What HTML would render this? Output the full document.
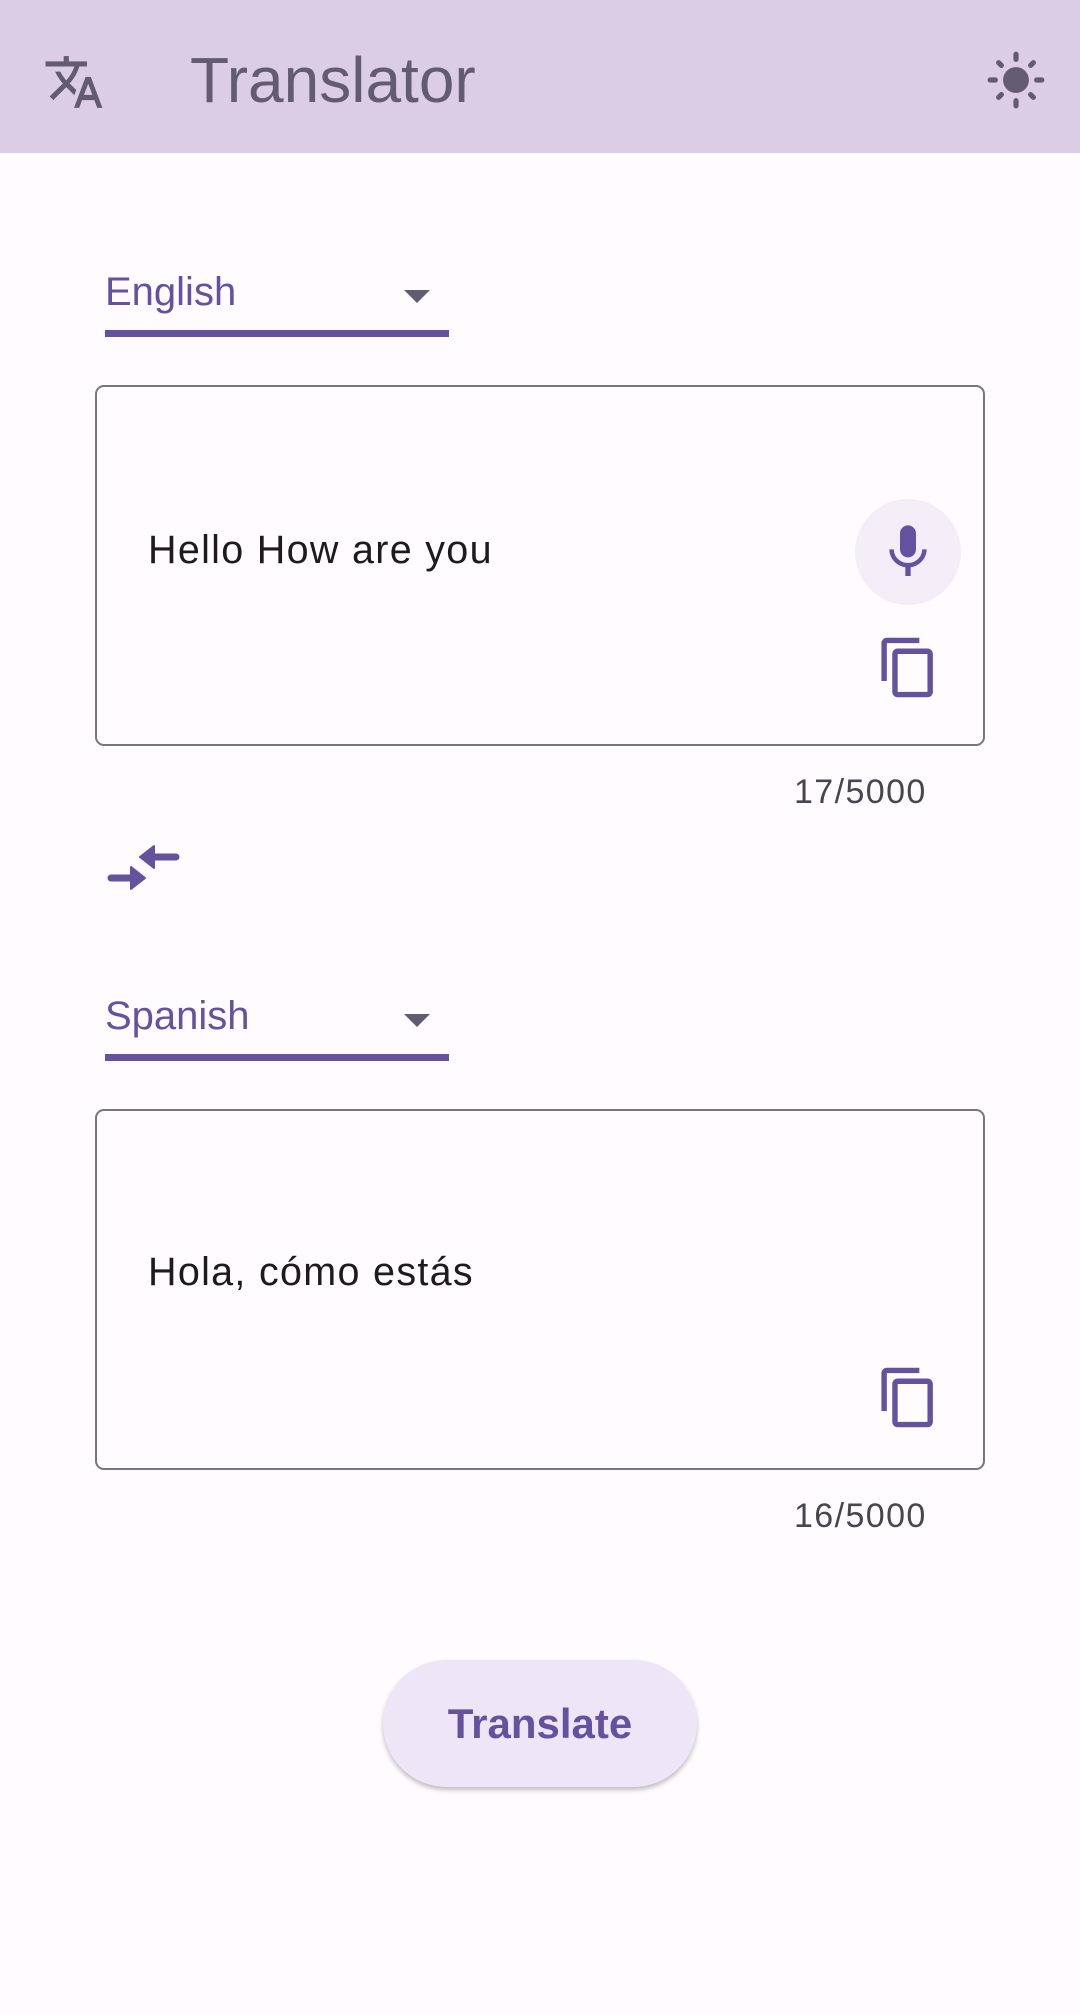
<!DOCTYPE html>
<html><head><meta charset="utf-8"><style>
*{margin:0;padding:0;box-sizing:border-box}
body{width:1080px;height:2014px;background:#fffbfe;font-family:"Liberation Sans",Roboto,sans-serif;position:relative;overflow:hidden}
.abs{position:absolute}
.hdr{left:0;top:0;width:1080px;height:153px;background:#dccde7}
.title{left:190px;top:42px;font-size:64px;color:#625b71;line-height:76px}
.lang{left:105px;font-size:40px;color:#65529f;line-height:46px}
.ul{left:105px;width:344px;height:7px;background:#65529f}
.arrow{width:0;height:0;border-left:13px solid transparent;border-right:13px solid transparent;border-top:13px solid #625b71}
.box{left:95px;width:890px;height:361px;border:2px solid #79747e;border-radius:9px}
.txt{left:148px;font-size:39.5px;letter-spacing:1.3px;color:#1d1b20;line-height:46px}
.cnt{left:794px;font-size:34px;letter-spacing:1.4px;color:#49454f;line-height:40px}
.btn{left:383px;top:1660px;width:314px;height:127px;border-radius:64px;background:#eee6f6;box-shadow:0 3px 5px rgba(0,0,0,.25);font-weight:bold;color:#65529f;font-size:42px;text-align:center;line-height:127px}
</style></head><body>
<div class="abs hdr"></div>
<svg class="abs" style="left:43px;top:51px" width="62" height="62" viewBox="0 0 24 24"><path fill="#625b71" d="M12.87 15.07l-2.54-2.51.03-.03c1.74-1.94 2.98-4.17 3.71-6.53H17V4h-7V2H8v2H1v1.99h11.17C11.5 7.92 10.44 9.75 9 11.35 8.07 10.32 7.3 9.19 6.69 8h-2c.73 1.63 1.73 3.17 2.98 4.56l-5.09 5.02L4 19l5-5 3.11 3.11.76-2.04zM18.5 10h-2L12 22h2l1.12-3h4.75L21 22h2l-4.5-12zm-2.62 7l1.62-4.33L19.12 17h-3.24z"/></svg>
<div class="abs title">Translator</div>
<svg class="abs" style="left:985px;top:49px" width="62" height="62" viewBox="0 0 24 24"><path fill="#625b71" d="M12 7c-2.76 0-5 2.24-5 5s2.24 5 5 5 5-2.24 5-5-2.24-5-5-5zM2 13h2c.55 0 1-.45 1-1s-.45-1-1-1H2c-.55 0-1 .45-1 1s.45 1 1 1zm18 0h2c.55 0 1-.45 1-1s-.45-1-1-1h-2c-.55 0-1 .45-1 1s.45 1 1 1zM11 2v2c0 .55.45 1 1 1s1-.45 1-1V2c0-.55-.45-1-1-1s-1 .45-1 1zm0 18v2c0 .55.45 1 1 1s1-.45 1-1v-2c0-.55-.45-1-1-1s-1 .45-1 1zM5.99 4.58c-.39-.39-1.03-.39-1.41 0-.39.39-.39 1.03 0 1.41l1.06 1.06c.39.39 1.03.39 1.41 0s.39-1.03 0-1.41L5.99 4.58zm12.37 12.37c-.39-.39-1.03-.39-1.41 0-.39.39-.39 1.03 0 1.41l1.06 1.06c.39.39 1.03.39 1.41 0 .39-.39.39-1.03 0-1.41l-1.06-1.06zm1.06-10.96c.39-.39.39-1.03 0-1.41-.39-.39-1.03-.39-1.41 0l-1.06 1.06c-.39.39-.39 1.03 0 1.41s1.03.39 1.41 0l1.06-1.06zM7.05 18.36c.39-.39.39-1.03 0-1.41-.39-.39-1.03-.39-1.41 0l-1.06 1.06c-.39.39-.39 1.03 0 1.41s1.03.39 1.41 0l1.06-1.06z"/></svg>

<div class="abs lang" style="top:269px">English</div>
<div class="abs arrow" style="left:404px;top:290px"></div>
<div class="abs ul" style="top:330px"></div>
<div class="abs box" style="top:385px"></div>
<div class="abs txt" style="top:527px">Hello How are you</div>
<div class="abs" style="left:855px;top:499px;width:106px;height:106px;border-radius:53px;background:#f3edf7"></div>
<svg class="abs" style="left:876px;top:520px" width="64" height="64" viewBox="0 0 24 24"><path fill="#65529f" d="M12 14c1.66 0 2.99-1.34 2.99-3L15 5c0-1.66-1.34-3-3-3S9 3.34 9 5v6c0 1.66 1.34 3 3 3zm5.3-3c0 3-2.54 5.1-5.3 5.1S6.7 14 6.7 11H5c0 3.41 2.72 6.23 6 6.72V21h2v-3.28c3.28-.48 6-3.3 6-6.72h-1.7z"/></svg>
<svg class="abs" style="left:876px;top:635px" width="65" height="65" viewBox="0 0 24 24"><path fill="#65529f" d="M16 1H4c-1.1 0-2 .9-2 2v14h2V3h12V1zm3 4H8c-1.1 0-2 .9-2 2v14c0 1.1.9 2 2 2h11c1.1 0 2-.9 2-2V7c0-1.1-.9-2-2-2zm0 16H8V7h11v14z"/></svg>
<div class="abs cnt" style="top:772px">17/5000</div>

<svg class="abs" style="left:100px;top:840px" width="90" height="60" viewBox="0 0 90 60"><g fill="none" stroke="#65529f" stroke-width="7" stroke-linecap="round"><path d="M52 17H76"/><path d="M11 38H33"/></g><path fill="#65529f" stroke="#65529f" stroke-width="2" stroke-linejoin="round" d="M54 6L54 28L40 17Z M31 27L31 49L45 38Z"/></svg>

<div class="abs lang" style="top:993px">Spanish</div>
<div class="abs arrow" style="left:404px;top:1014px"></div>
<div class="abs ul" style="top:1054px"></div>
<div class="abs box" style="top:1109px"></div>
<div class="abs txt" style="top:1249px">Hola, cómo estás</div>
<svg class="abs" style="left:876px;top:1365px" width="65" height="65" viewBox="0 0 24 24"><path fill="#65529f" d="M16 1H4c-1.1 0-2 .9-2 2v14h2V3h12V1zm3 4H8c-1.1 0-2 .9-2 2v14c0 1.1.9 2 2 2h11c1.1 0 2-.9 2-2V7c0-1.1-.9-2-2-2zm0 16H8V7h11v14z"/></svg>
<div class="abs cnt" style="top:1496px">16/5000</div>

<div class="abs btn">Translate</div>
</body></html>
